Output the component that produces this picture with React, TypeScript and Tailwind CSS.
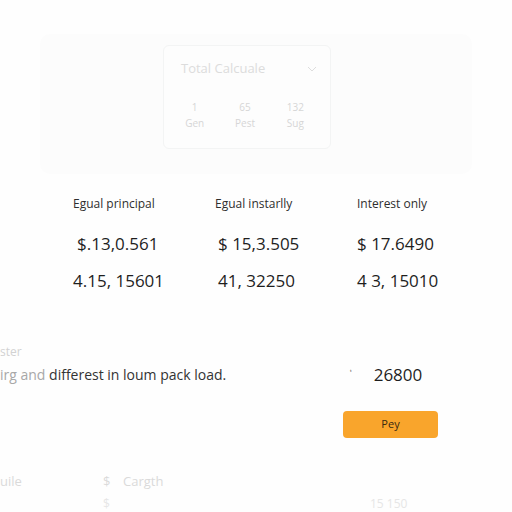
import React from "react";

export default function App() {
  return (
    <div
      className="w-[512px] h-[512px] overflow-hidden bg-[#fefefe] flex flex-col"
      style={{ fontFamily: '"Open Sans", "Noto Sans", sans-serif' }}
    >
      <div className="shrink-0 mt-[34px] mx-[40px] h-[140px] rounded-[10px] bg-[#fcfcfc] flex pt-[11px] pl-[123px]">
        <div className="w-[168px] h-[104px] rounded-[6px] border border-[#f3f4f4] bg-[#fdfdfd] flex flex-col px-[17px] pt-[14px]">
          <div className="flex items-center justify-between h-[18px]">
            <span className="text-[13px] text-[#dcdcdc]">Total Calcuale</span>
            <svg width="10" height="8" viewBox="0 0 10 8" className="-mr-[4px]">
              <path d="M1 2 L5 6 L9 2" fill="none" stroke="#dddddd" strokeWidth="1" />
            </svg>
          </div>
          <div className="flex gap-[15px] mt-[22px] -ml-[4px] text-[#d6d6d6] text-[10px] leading-[14px]">
            <div className="w-[40px] flex flex-col items-center gap-[2px]"><span>1</span><span>Gen</span></div>
            <div className="w-[40px] flex flex-col items-center gap-[2px]"><span>65</span><span>Pest</span></div>
            <div className="w-[40px] flex flex-col items-center gap-[2px]"><span>132</span><span>Sug</span></div>
          </div>
        </div>
      </div>

      <div className="shrink-0 mt-[22px] pl-[73px] grid grid-cols-[142px_142px_142px] text-[12px] leading-[16px] text-[#2e2e2e]">
        <span>Egual principal</span>
        <span>Egual instarlly</span>
        <span>Interest only</span>
      </div>
      <div className="shrink-0 mt-[20px] pl-[73px] grid grid-cols-[142px_142px_142px] text-[17px] leading-[24px] text-[#1e1e1e]">
        <span className="pl-[4px]">$.13,0.561</span>
        <span className="pl-[3px]">$ 15,3.505</span>
        <span>$ 17.6490</span>
      </div>
      <div className="shrink-0 mt-[13px] pl-[73px] grid grid-cols-[142px_142px_142px] text-[17px] leading-[24px] text-[#1e1e1e]">
        <span>4.15, 15601</span>
        <span className="pl-[3px]">41, 32250</span>
        <span>4 3, 15010</span>
      </div>

      <div className="shrink-0 mt-[51px] text-[12px] leading-[16px] text-[#d2d2d2]">ster</div>
      <div className="shrink-0 mt-[5px] flex items-center h-[20px]">
        <div className="w-[343px] shrink-0 text-[14px] leading-[20px] text-[#333333] whitespace-nowrap">
          <span className="text-[#a8a8a8]">irg and </span>differest in loum pack load.
        </div>
        <div className="flex items-center">
          <span className="ml-[7px] text-[7px] text-[#444] -mt-[6px]">ᵗ</span>
          <span className="ml-[22px] text-[17px] leading-[24px] text-[#1e1e1e]">26800</span>
        </div>
      </div>
      <div className="shrink-0 mt-[25px] pl-[343px]">
        <button className="w-[95px] h-[27px] rounded-[4px] bg-[#f9a52c] text-[11px] text-[#3a2a10]">
          Pey
        </button>
      </div>

      <div className="shrink-0 mt-[34px] flex items-center text-[13px] leading-[18px] text-[#dadada]">
        <span className="w-[103px]">uile</span>
        <span className="w-[20px]">$</span>
        <span>Cargth</span>
      </div>
      <div className="shrink-0 mt-[6px] flex items-center text-[12px] leading-[16px] text-[#e6e6e6]">
        <span className="w-[103px]"></span>
        <span className="w-[267px]">$</span>
        <span>15 150</span>
      </div>
    </div>
  );
}
